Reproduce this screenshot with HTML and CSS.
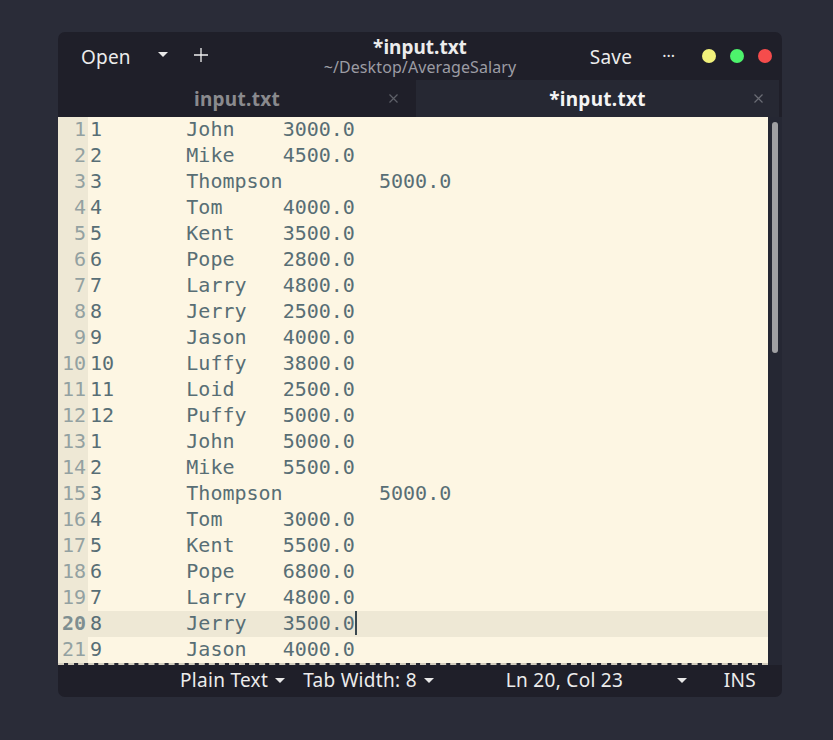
FILE: index.html
```html
<!DOCTYPE html>
<html>
<head>
<meta charset="utf-8">
<link rel="stylesheet" href="styles.css">
</head>
<body>
<div class="window">
  <header class="header">
    <div class="hleft">
      <span class="btn-open">Open</span>
      <svg class="tri" width="10" height="6" viewBox="0 0 10 6"><path d="M0 0 L10 0 L5 5 Z" fill="#e8e8e8"/></svg>
      <svg class="plus" width="14" height="14" viewBox="0 0 14 14"><path d="M7 0 V14 M0 7 H14" stroke="#f0f0f0" stroke-width="1.3"/></svg>
    </div>
    <div class="htitle">
      <div class="title">*input.txt</div>
      <div class="subtitle">~/Desktop/AverageSalary</div>
    </div>
    <div class="hright">
      <span class="btn-save">Save</span>
      <span class="dots">···</span>
      <span class="dot yellow"></span>
      <span class="dot green"></span>
      <span class="dot red"></span>
    </div>
  </header>
  <nav class="tabs">
    <div class="tab">
      <span class="tab-label">input.txt</span>
      <svg class="tab-x" width="9" height="9" viewBox="0 0 9 9"><path d="M0.5 0.5 L8.5 8.5 M8.5 0.5 L0.5 8.5" stroke="#5e6068" stroke-width="1.2"/></svg>
    </div>
    <div class="tab active">
      <span class="tab-label">*input.txt</span>
      <svg class="tab-x" width="9" height="9" viewBox="0 0 9 9"><path d="M0.5 0.5 L8.5 8.5 M8.5 0.5 L0.5 8.5" stroke="#6a6c74" stroke-width="1.2"/></svg>
    </div>
  </nav>
  <main class="editor">
    <div class="doc">
      <div class="gutter">
        <div class="ln">1</div><div class="ln">2</div><div class="ln">3</div><div class="ln">4</div><div class="ln">5</div><div class="ln">6</div><div class="ln">7</div><div class="ln">8</div><div class="ln">9</div><div class="ln">10</div><div class="ln">11</div><div class="ln">12</div><div class="ln">13</div><div class="ln">14</div><div class="ln">15</div><div class="ln">16</div><div class="ln">17</div><div class="ln">18</div><div class="ln">19</div><div class="ln cur">20</div><div class="ln">21</div>
      </div>
      <div class="code"><div class="line">1	John	3000.0</div><div class="line">2	Mike	4500.0</div><div class="line">3	Thompson	5000.0</div><div class="line">4	Tom	4000.0</div><div class="line">5	Kent	3500.0</div><div class="line">6	Pope	2800.0</div><div class="line">7	Larry	4800.0</div><div class="line">8	Jerry	2500.0</div><div class="line">9	Jason	4000.0</div><div class="line">10	Luffy	3800.0</div><div class="line">11	Loid	2500.0</div><div class="line">12	Puffy	5000.0</div><div class="line">1	John	5000.0</div><div class="line">2	Mike	5500.0</div><div class="line">3	Thompson	5000.0</div><div class="line">4	Tom	3000.0</div><div class="line">5	Kent	5500.0</div><div class="line">6	Pope	6800.0</div><div class="line">7	Larry	4800.0</div><div class="line cur">8	Jerry	3500.0<span class="caret"></span></div><div class="line">9	Jason	4000.0</div></div>
    </div>
    <div class="vscroll"><div class="thumb"></div></div>
  </main>
  <footer class="status">
    <span class="st lang">Plain Text</span>
    <svg class="st-tri t1" width="10" height="6" viewBox="0 0 10 6"><path d="M0 0 L10 0 L5 5 Z" fill="#e8e8e8"/></svg>
    <span class="st tabw">Tab Width: 8</span>
    <svg class="st-tri t2" width="10" height="6" viewBox="0 0 10 6"><path d="M0 0 L10 0 L5 5 Z" fill="#e8e8e8"/></svg>
    <span class="st pos">Ln 20, Col 23</span>
    <svg class="st-tri t3" width="10" height="6" viewBox="0 0 10 6"><path d="M0 0 L10 0 L5 5 Z" fill="#e8e8e8"/></svg>
    <span class="st ins">INS</span>
  </footer>
</div>
</body>
</html>
```

FILE: styles.css
```css
* { box-sizing: border-box; }
html, body { margin: 0; padding: 0; }
body {
  background: #2a2c38;
  width: 833px;
  height: 740px;
  padding: 32px 51px 0 58px;
  font-family: "Noto Sans", "DejaVu Sans", sans-serif;
  color: #ececec;
}
.window {
  width: 724px;
  height: 665px;
  background: #1f1f29;
  border-radius: 7px;
  overflow: hidden;
  display: flex;
  flex-direction: column;
}
.header {
  height: 48px;
  flex: none;
  display: grid;
  grid-template-columns: 1fr auto 1fr;
  align-items: center;
}
.hleft {
  display: flex;
  align-items: center;
  padding-left: 23px;
}
.btn-open { font-size: 19px; letter-spacing: 0.2px; margin-top: 2px; }
.tri { margin-left: 27px; margin-top: -2px; }
.plus { margin-left: 26px; margin-top: -2px; }
.htitle { text-align: center; padding-top: 1px; }
.title { font-weight: bold; font-size: 19px; line-height: 21px; }
.subtitle { font-size: 16px; line-height: 19px; color: #9c9ca4; letter-spacing: 0.1px; }
.hright {
  display: flex;
  align-items: center;
  justify-content: flex-end;
  padding-right: 10px;
}
.btn-save { font-size: 19px; margin-right: 30px; margin-top: 2px; letter-spacing: 0.2px; }
.dots { font-size: 16px; margin-right: 27px; margin-top: 0; }
.dot { width: 14px; height: 14px; border-radius: 50%; margin-left: 14px; }
.dots + .dot { margin-left: 0; }
.yellow { background: #f1f17b; }
.green { background: #4df36c; }
.red { background: #f54c4c; }

.tabs {
  height: 37px;
  flex: none;
  display: flex;
}
.tab {
  width: 358px;
  display: flex;
  align-items: center;
  justify-content: center;
  position: relative;
}
.tab.active {
  flex: 1;
  background: #262833;
  margin-right: 3px;
}
.tab-label { font-weight: bold; font-size: 19px; color: #8a8a8e; letter-spacing: 0.3px; }
.tab.active .tab-label { color: #f4f4f4; }
.tab-x { position: absolute; right: 18px; top: 14px; }
.tab.active .tab-x { right: 16px; }

.editor {
  height: 548px;
  flex: none;
  display: flex;
  background: #252733;
}
.doc {
  width: 710px;
  height: 548px;
  display: flex;
  background: #fdf6e3;
  border-bottom: 2px dashed #d2ccbd;
  background-clip: padding-box;
  overflow: hidden;
}
.gutter {
  width: 30px;
  flex: none;
  background: #eee8d5;
  font-family: "DejaVu Sans Mono", monospace;
  font-size: 20px;
  color: #93a1a1;
}
.ln { height: 26px; line-height: 25px; text-align: right; padding-right: 2px; }
.ln.cur { color: #7f8f91; font-weight: bold; }
.code {
  flex: 1;
  font-family: "DejaVu Sans Mono", monospace;
  font-size: 20px;
  color: #586e75;
  white-space: pre;
  tab-size: 8;
  -moz-tab-size: 8;
}
.line { height: 26px; line-height: 25px; padding-left: 2px; }
.line.cur { background: #eee8d5; }
.caret {
  display: inline-block;
  width: 2px;
  height: 24px;
  background: #3a4850;
  vertical-align: -5px;
}
.vscroll {
  width: 14px;
  flex: none;
  padding: 5px 0 0 4px;
}
.thumb {
  width: 6px;
  height: 231px;
  border-radius: 3px;
  background: #a0a0a3;
}

.status {
  flex: 1;
  display: flex;
  align-items: center;
  font-size: 19px;
  color: #ececec;
  padding-bottom: 2px;
}
.st { white-space: nowrap; letter-spacing: 0.3px; }
.st-tri { flex: none; margin-top: 2px; }
.lang { margin-left: 122px; }
.t1 { margin-left: 7px; }
.tabw { margin-left: 18px; }
.t2 { margin-left: 7px; }
.pos { margin-left: 72px; }
.t3 { margin-left: auto; }
.ins { margin-left: 37px; margin-right: 26px; }
```
